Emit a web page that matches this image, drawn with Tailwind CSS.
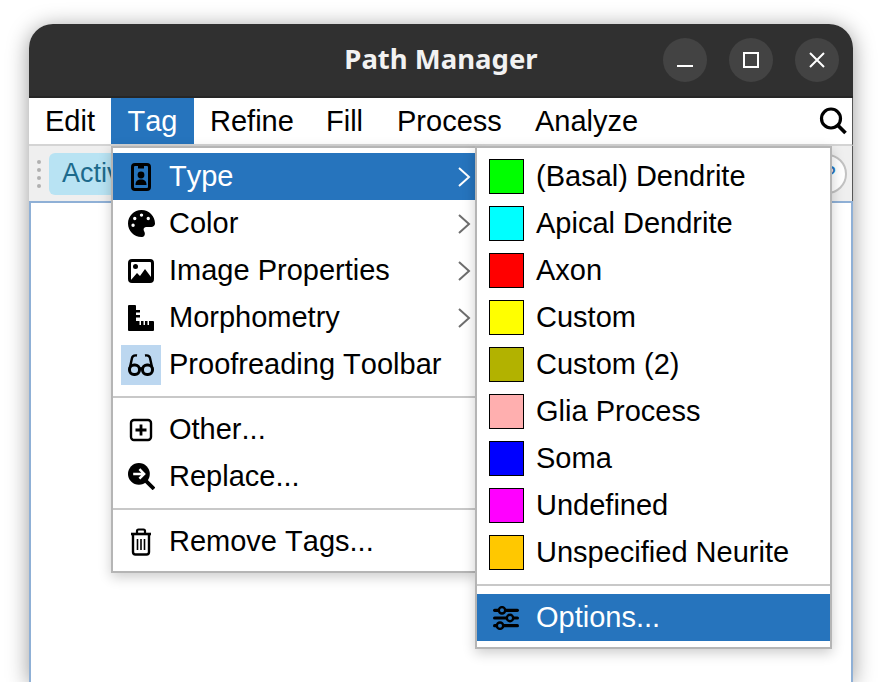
<!DOCTYPE html>
<html lang="en">
<head>
  <meta charset="UTF-8">
  <title>Path Manager</title>
  <script src="https://cdn.jsdelivr.net/npm/@tailwindcss/browser@4"></script>
</head>
<body class="bg-white h-[682px] overflow-hidden font-['Liberation_Sans',sans-serif] [font-kerning:none] text-[29px] text-black">

  <!-- Window -->
  <div class="relative w-[824px] h-[658px] ml-[29px] mt-[24px] flex flex-col rounded-t-[24px] shadow-[0_3px_22px_rgba(0,0,0,0.4)] bg-white">

    <!-- Title bar -->
    <div class="relative h-[74px] flex items-center justify-center rounded-t-[24px] bg-[#303030] border-b-2 border-[#262626] shrink-0">
      <div class="font-['Noto_Sans',sans-serif] font-bold text-[27.5px] text-[#f2f2f2] -translate-y-[1px]">Path Manager</div>
      <div class="absolute left-[634px] top-[14px] flex gap-[22px]">
        <div class="w-[44px] h-[44px] rounded-full bg-[#434343] flex items-center justify-center">
          <svg width="18" height="18" viewBox="0 0 18 18"><rect x="1" y="14" width="16" height="2" fill="#fff"/></svg>
        </div>
        <div class="w-[44px] h-[44px] rounded-full bg-[#434343] flex items-center justify-center">
          <svg width="16" height="16" viewBox="0 0 16 16"><rect x="1" y="1" width="14" height="14" fill="none" stroke="#fff" stroke-width="2"/></svg>
        </div>
        <div class="w-[44px] h-[44px] rounded-full bg-[#434343] flex items-center justify-center">
          <svg width="18" height="18" viewBox="0 0 18 18"><path d="M2 2L16 16M16 2L2 16" stroke="#fff" stroke-width="2"/></svg>
        </div>
      </div>
    </div>

    <!-- Menu bar -->
    <div class="h-[48px] flex items-center shrink-0 bg-white border-r border-[#555] border-b-2 border-b-[#d4d4d4]">
      <div class="w-[82px] pl-[16px] pt-[2px] h-full flex items-center">Edit</div>
      <div class="w-[83px] justify-center pt-[2px] h-full flex items-center bg-[#2674bd] text-white">Tag</div>
      <div class="w-[116px] pl-[16px] pt-[2px] h-full flex items-center">Refine</div>
      <div class="w-[71px] pl-[16px] pt-[2px] h-full flex items-center">Fill</div>
      <div class="w-[138px] pl-[16px] pt-[2px] h-full flex items-center">Process</div>
      <div class="pl-[16px] pt-[2px] h-full flex items-center">Analyze</div>
      <svg class="ml-auto mr-[5px]" width="28" height="28" viewBox="0 0 28 28" fill="none" stroke="#000"><circle cx="12" cy="11.500" r="9.500" stroke-width="3.200"/><path d="M18.500 18L26.500 26" stroke-width="3.800"/></svg>
    </div>

    <!-- Toolbar -->
    <div class="h-[55px] flex items-center shrink-0 bg-[#efefef] border-r border-[#555]">
      <div class="ml-[8px] flex flex-col gap-[4px]">
        <div class="w-[4px] h-[4px] rounded-full bg-[#b0b0b0]"></div>
        <div class="w-[4px] h-[4px] rounded-full bg-[#b0b0b0]"></div>
        <div class="w-[4px] h-[4px] rounded-full bg-[#b0b0b0]"></div>
        <div class="w-[4px] h-[4px] rounded-full bg-[#b0b0b0]"></div>
      </div>
      <div class="ml-[8px] h-[42px] w-[160px] rounded-[6px] bg-[#b8e3f3] text-[#1c6a8c] text-[27px] pl-[13px] flex items-center">Active</div>
      <div class="ml-auto mr-[5px] w-[40px] h-[40px] rounded-full border-2 border-[#c2c2c2] bg-white flex items-center justify-center pl-[5px] text-[#2674bd] text-[22px]">?</div>
    </div>

    <!-- Content -->
    <div class="flex-1 bg-white border-2 border-b-0 border-[#8fb0d6]"></div>

    <!-- Tag menu -->
    <div class="absolute left-[82px] top-[122px] w-[366px] h-[427px] bg-white border-2 border-[#b5b5b5] pt-[5px] shadow-[0_4px_12px_rgba(0,0,0,0.2)]">
      <div class="h-[47px] flex items-center bg-[#2674bd] text-white">
        <div class="w-[40px] h-[40px] ml-[8px] flex items-center justify-center">
          <svg width="26" height="28" viewBox="0 0 26 28"><rect x="4.500" y="1.500" width="17" height="25" rx="2.500" fill="none" stroke="#000" stroke-width="3"/><rect x="10" y="3" width="6" height="2.500" fill="#000"/><circle cx="13" cy="12" r="3.400" fill="#000"/><path d="M7.500 22c0-4 2-5.500 5.500-5.500s5.500 1.500 5.500 5.500z" fill="#000"/></svg>
        </div>
        <span class="ml-[8px]">Type</span>
        <svg class="ml-auto mr-[4px]" width="14" height="22" viewBox="0 0 14 22" fill="none" stroke="#fff" stroke-width="2"><path d="M2 2L12 11L2 20"/></svg>
      </div>
      <div class="h-[47px] flex items-center">
        <div class="w-[40px] h-[40px] ml-[8px] flex items-center justify-center">
          <svg width="27" height="27" viewBox="0 0 512 512"><path d="M512 256c0 .9 0 1.800 0 2.700c-.4 36.500-33.600 61.300-70.100 61.300H344c-26.500 0-48 21.500-48 48c0 3.400 .4 6.700 1 9.900c2.100 10.200 6.500 20 10.800 29.900c6.100 13.800 12.100 27.500 12.100 42c0 31.800-21.600 60.700-53.400 62c-3.500 .1-7 .2-10.600 .2C114.600 512 0 397.400 0 256S114.600 0 256 0S512 114.600 512 256zM128 288a32 32 0 1 0 -64 0 32 32 0 1 0 64 0zm0-96a32 32 0 1 0 0-64 32 32 0 1 0 0 64zM288 96a32 32 0 1 0 -64 0 32 32 0 1 0 64 0zm96 96a32 32 0 1 0 0-64 32 32 0 1 0 0 64z"/></svg>
        </div>
        <span class="ml-[8px]">Color</span>
        <svg class="ml-auto mr-[4px]" width="14" height="22" viewBox="0 0 14 22" fill="none" stroke="#6e6e6e" stroke-width="2"><path d="M2 2L12 11L2 20"/></svg>
      </div>
      <div class="h-[47px] flex items-center">
        <div class="w-[40px] h-[40px] ml-[8px] flex items-center justify-center">
          <svg width="26" height="24" viewBox="0 0 26 24"><rect x="1.500" y="1.500" width="23" height="21" rx="2.500" fill="none" stroke="#000" stroke-width="3"/><circle cx="7.500" cy="7.500" r="2.500" fill="#000"/><path d="M3 21L9 14L12 17L17 10L23 18V21Z" fill="#000"/></svg>
        </div>
        <span class="ml-[8px]">Image Properties</span>
        <svg class="ml-auto mr-[4px]" width="14" height="22" viewBox="0 0 14 22" fill="none" stroke="#6e6e6e" stroke-width="2"><path d="M2 2L12 11L2 20"/></svg>
      </div>
      <div class="h-[47px] flex items-center">
        <div class="w-[40px] h-[40px] ml-[8px] flex items-center justify-center">
          <svg width="26" height="26" viewBox="0 0 26 26"><path d="M0 1a1 1 0 0 1 1-1h6a1 1 0 0 1 1 1v4h4v2.500H8V10h4v2.500H8V16h3.500v4H13v-4h2.500v4H17v-4h2.500v4H21v-4h4a1 1 0 0 1 1 1v8a1 1 0 0 1-1 1H1a1 1 0 0 1-1-1Z"/></svg>
        </div>
        <span class="ml-[8px]">Morphometry</span>
        <svg class="ml-auto mr-[4px]" width="14" height="22" viewBox="0 0 14 22" fill="none" stroke="#6e6e6e" stroke-width="2"><path d="M2 2L12 11L2 20"/></svg>
      </div>
      <div class="h-[47px] flex items-center">
        <div class="w-[40px] h-[40px] ml-[8px] flex items-center justify-center bg-[#bcd7f0]">
          <svg width="28" height="24" viewBox="0 0 28 24" fill="none" stroke="#000"><rect x="2.500" y="12" width="10" height="9.500" rx="4.500" stroke-width="3"/><rect x="15.500" y="12" width="10" height="9.500" rx="4.500" stroke-width="3"/><path d="M12 15.500h4" stroke-width="2.600"/><path d="M2.500 16.500L5 5C5.400 3 7 2 10 2.500M25.500 16.500L23 5C22.600 3 21 2 18 2.500" stroke-width="2.400"/></svg>
        </div>
        <span class="ml-[8px]">Proofreading Toolbar</span>
      </div>
      <div class="h-[2px] my-[8px] bg-[#c8c8c8]"></div>
      <div class="h-[47px] flex items-center">
        <div class="w-[40px] h-[40px] ml-[8px] flex items-center justify-center">
          <svg width="24" height="24" viewBox="0 0 24 24" fill="none" stroke="#000"><rect x="2" y="2" width="20" height="20" rx="3" stroke-width="2.400"/><path d="M12 6.500v11M6.500 12h11" stroke-width="2.800"/></svg>
        </div>
        <span class="ml-[8px]">Other...</span>
      </div>
      <div class="h-[47px] flex items-center">
        <div class="w-[40px] h-[40px] ml-[8px] flex items-center justify-center">
          <svg width="27" height="27" viewBox="0 0 26 26"><circle cx="10.500" cy="10.500" r="10.500"/><path d="M17 17L25 25" stroke="#000" stroke-width="3.600"/><path d="M5 10.500h10M11 6l4.500 4.500L11 15" fill="none" stroke="#fff" stroke-width="2.400"/></svg>
        </div>
        <span class="ml-[8px]">Replace...</span>
      </div>
      <div class="h-[2px] my-[8px] bg-[#c8c8c8]"></div>
      <div class="h-[47px] flex items-center">
        <div class="w-[40px] h-[40px] ml-[8px] flex items-center justify-center">
          <svg width="24" height="28" viewBox="0 0 24 28" fill="none" stroke="#000"><path d="M2 6h20" stroke-width="2.600"/><path d="M8 5V3a1.500 1.500 0 0 1 1.500-1.500h5A1.500 1.500 0 0 1 16 3v2" stroke-width="2.200"/><path d="M4 7v17a2.500 2.500 0 0 0 2.500 2.500h11A2.500 2.500 0 0 0 20 24V7" stroke-width="2.400"/><path d="M8.500 11v11M12 11v11M15.500 11v11" stroke-width="1.600"/></svg>
        </div>
        <span class="ml-[8px]">Remove Tags...</span>
      </div>
    </div>

    <!-- Type submenu -->
    <div class="absolute left-[446px] top-[122px] w-[357px] h-[503px] bg-white border-2 border-[#b5b5b5] pt-[5px] shadow-[0_4px_12px_rgba(0,0,0,0.2)]">
      <div class="h-[47px] flex items-center"><div class="w-[35px] h-[35px] ml-[12px] border border-black bg-[#00ff00]"></div><span class="ml-[12px]">(Basal) Dendrite</span></div>
      <div class="h-[47px] flex items-center"><div class="w-[35px] h-[35px] ml-[12px] border border-black bg-[#00ffff]"></div><span class="ml-[12px]">Apical Dendrite</span></div>
      <div class="h-[47px] flex items-center"><div class="w-[35px] h-[35px] ml-[12px] border border-black bg-[#ff0000]"></div><span class="ml-[12px]">Axon</span></div>
      <div class="h-[47px] flex items-center"><div class="w-[35px] h-[35px] ml-[12px] border border-black bg-[#ffff00]"></div><span class="ml-[12px]">Custom</span></div>
      <div class="h-[47px] flex items-center"><div class="w-[35px] h-[35px] ml-[12px] border border-black bg-[#b2b200]"></div><span class="ml-[12px]">Custom (2)</span></div>
      <div class="h-[47px] flex items-center"><div class="w-[35px] h-[35px] ml-[12px] border border-black bg-[#ffafaf]"></div><span class="ml-[12px]">Glia Process</span></div>
      <div class="h-[47px] flex items-center"><div class="w-[35px] h-[35px] ml-[12px] border border-black bg-[#0000ff]"></div><span class="ml-[12px]">Soma</span></div>
      <div class="h-[47px] flex items-center"><div class="w-[35px] h-[35px] ml-[12px] border border-black bg-[#ff00ff]"></div><span class="ml-[12px]">Undefined</span></div>
      <div class="h-[47px] flex items-center"><div class="w-[35px] h-[35px] ml-[12px] border border-black bg-[#ffc800]"></div><span class="ml-[12px]">Unspecified Neurite</span></div>
      <div class="h-[2px] my-[8px] bg-[#c8c8c8]"></div>
      <div class="h-[47px] flex items-center bg-[#2674bd] text-white">
        <div class="w-[35px] h-[35px] ml-[11px] mr-[1px] flex items-center justify-center">
          <svg width="28" height="24" viewBox="0 0 28 24" fill="#000"><rect x="1" y="2.700" width="26" height="3.200" rx="1.600"/><rect x="1" y="10.400" width="26" height="3.200" rx="1.600"/><rect x="1" y="18.100" width="26" height="3.200" rx="1.600"/><circle cx="10" cy="4.300" r="3.200" fill="#2674bd" stroke="#000" stroke-width="2.400"/><circle cx="18" cy="12" r="3.200" fill="#2674bd" stroke="#000" stroke-width="2.400"/><circle cx="8" cy="19.700" r="3.200" fill="#2674bd" stroke="#000" stroke-width="2.400"/></svg>
        </div>
        <span class="ml-[12px]">Options...</span>
      </div>
    </div>
  </div>
</body>
</html>
